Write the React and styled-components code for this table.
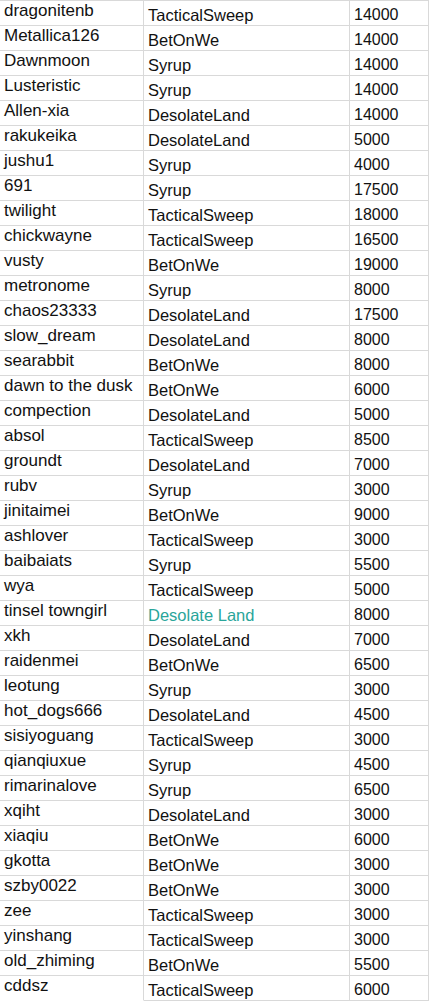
import React from 'react';
import styled, { createGlobalStyle } from 'styled-components';

const rows = [
  ['dragonitenb', 'TacticalSweep', '14000'],
  ['Metallica126', 'BetOnWe', '14000'],
  ['Dawnmoon', 'Syrup', '14000'],
  ['Lusteristic', 'Syrup', '14000'],
  ['Allen-xia', 'DesolateLand', '14000'],
  ['rakukeika', 'DesolateLand', '5000'],
  ['jushu1', 'Syrup', '4000'],
  ['691', 'Syrup', '17500'],
  ['twilight', 'TacticalSweep', '18000'],
  ['chickwayne', 'TacticalSweep', '16500'],
  ['vusty', 'BetOnWe', '19000'],
  ['metronome', 'Syrup', '8000'],
  ['chaos23333', 'DesolateLand', '17500'],
  ['slow_dream', 'DesolateLand', '8000'],
  ['searabbit', 'BetOnWe', '8000'],
  ['dawn to the dusk', 'BetOnWe', '6000'],
  ['compection', 'DesolateLand', '5000'],
  ['absol', 'TacticalSweep', '8500'],
  ['groundt', 'DesolateLand', '7000'],
  ['rubv', 'Syrup', '3000'],
  ['jinitaimei', 'BetOnWe', '9000'],
  ['ashlover', 'TacticalSweep', '3000'],
  ['baibaiats', 'Syrup', '5500'],
  ['wya', 'TacticalSweep', '5000'],
  ['tinsel towngirl', 'Desolate Land', '8000', true],
  ['xkh', 'DesolateLand', '7000'],
  ['raidenmei', 'BetOnWe', '6500'],
  ['leotung', 'Syrup', '3000'],
  ['hot_dogs666', 'DesolateLand', '4500'],
  ['sisiyoguang', 'TacticalSweep', '3000'],
  ['qianqiuxue', 'Syrup', '4500'],
  ['rimarinalove', 'Syrup', '6500'],
  ['xqiht', 'DesolateLand', '3000'],
  ['xiaqiu', 'BetOnWe', '6000'],
  ['gkotta', 'BetOnWe', '3000'],
  ['szby0022', 'BetOnWe', '3000'],
  ['zee', 'TacticalSweep', '3000'],
  ['yinshang', 'TacticalSweep', '3000'],
  ['old_zhiming', 'BetOnWe', '5500'],
  ['cddsz', 'TacticalSweep', '6000'],
];

const GlobalStyle = createGlobalStyle`
  body {
    margin: 0;
    background: #fff;
    font-family: "Liberation Sans", Arial, sans-serif;
    color: #111;
  }
`;

const Sheet = styled.div`
  width: 429px;
  border-top: 1px solid #d9d9d9;
`;

const Row = styled.div`
  display: grid;
  grid-template-columns: 144px 206px 79px;
  height: 25px;
`;

const Cell = styled.div`
  box-sizing: border-box;
  height: 25px;
  display: flex;
  overflow: hidden;
  white-space: nowrap;
  padding-left: 4px;
  border-right: 1px solid #d9d9d9;
  border-bottom: 1px solid ${(p) => (p.$noBottom ? 'transparent' : '#d9d9d9')};
`;

const NameCell = styled(Cell)`
  align-items: flex-start;
  font-size: 17px;
  line-height: 20px;
`;

const TeamCell = styled(Cell)`
  align-items: flex-end;
  font-family: "Liberation Sans Narrow", "Liberation Sans", sans-serif;
  font-size: 16.5px;
  line-height: 20px;
  color: ${(p) => (p.$highlight ? '#2aa59a' : '#111')};
`;

const ScoreCell = styled(Cell)`
  align-items: flex-end;
  font-family: "Liberation Sans Narrow", "Liberation Sans", sans-serif;
  font-size: 16px;
  line-height: 20px;
`;

export default function App() {
  return (
    <>
      <GlobalStyle />
      <Sheet>
        {rows.map(([name, team, score, hl], i) => (
          <Row key={i}>
            <NameCell $noBottom={i === rows.length - 1}>{name}</NameCell>
            <TeamCell $highlight={hl}>{team}</TeamCell>
            <ScoreCell>{score}</ScoreCell>
          </Row>
        ))}
      </Sheet>
    </>
  );
}
